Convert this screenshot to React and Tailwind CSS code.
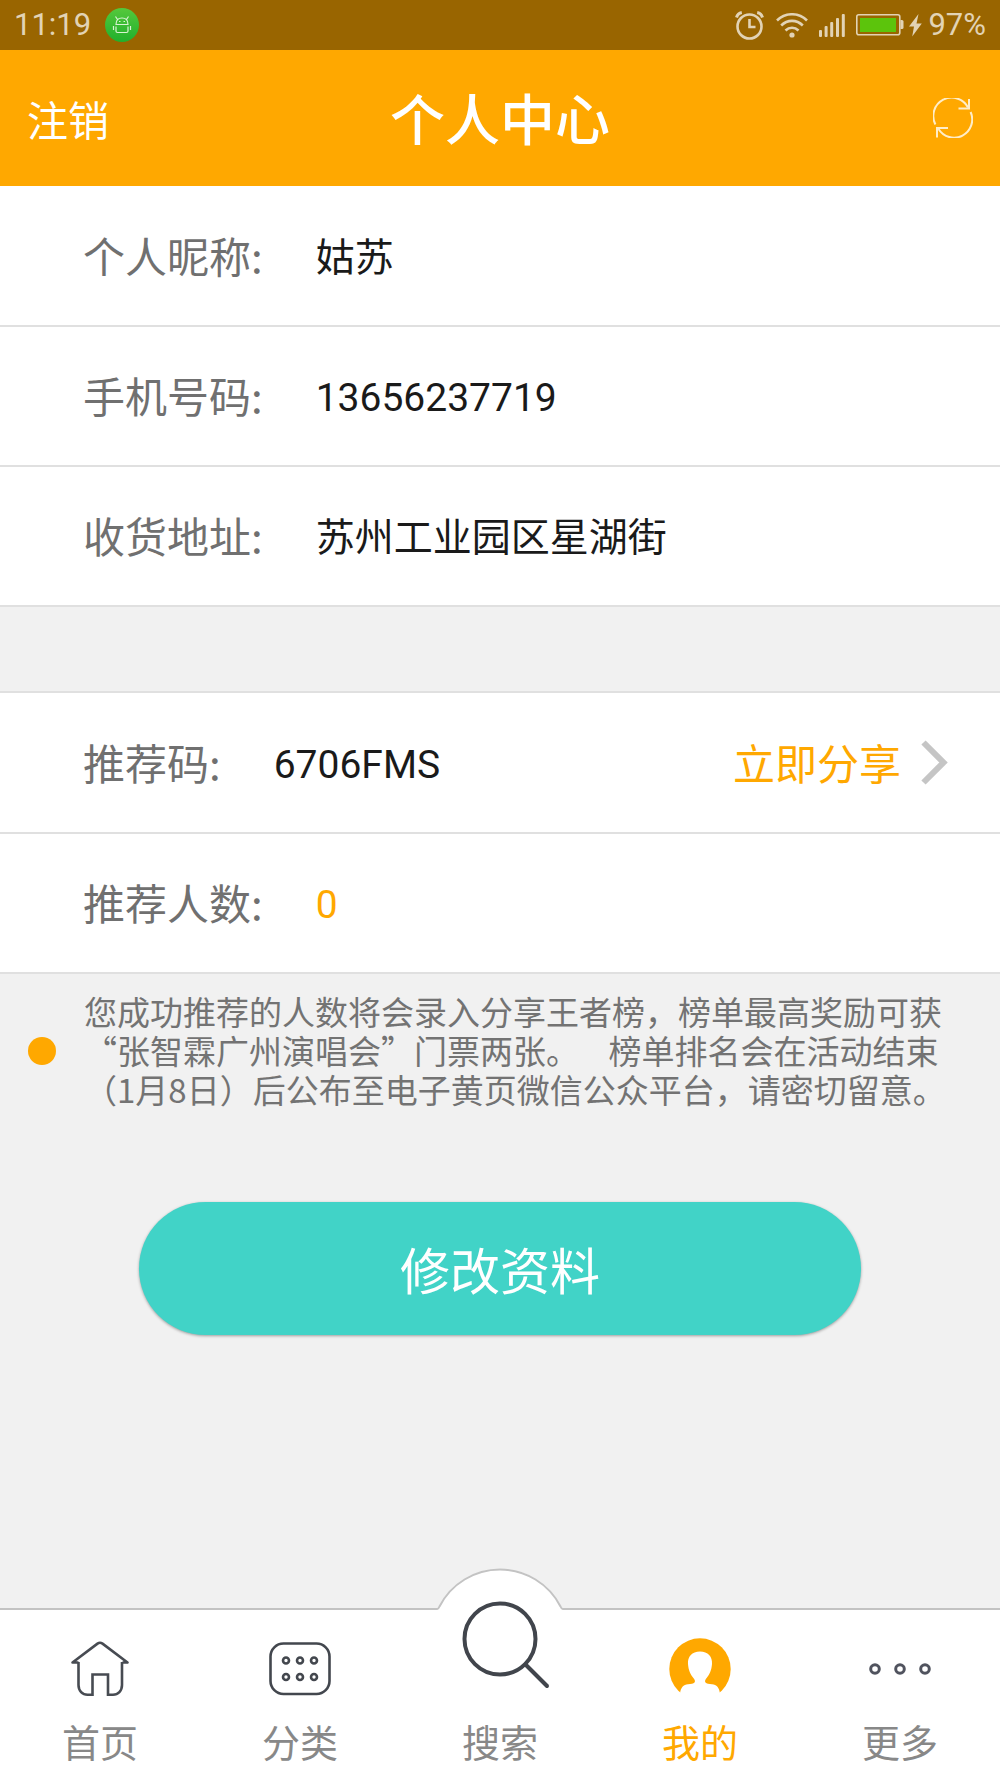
import React, { useState } from "react";

const profile = [
  { label: "个人昵称:", value: "姑苏" },
  { label: "手机号码:", value: "13656237719" },
  { label: "收货地址:", value: "苏州工业园区星湖街" },
];

const note = [
  "您成功推荐的人数将会录入分享王者榜，榜单最高奖励可获",
  "“张智霖广州演唱会”门票两张。    榜单排名会在活动结束",
  "（1月8日）后公布至电子黄页微信公众平台，请密切留意。",
].join("\n");

function StatusBar() {
  return (
    <div className="flex h-[50px] items-center justify-between bg-[#996500] px-[14px] font-['Roboto',sans-serif] text-[31px] leading-[50px] text-[#e2d3b5]">
      <div className="flex items-center gap-[14px]">
        <span>11:19</span>
        <svg width="34" height="34" viewBox="0 0 34 34" fill="none">
          <defs>
            <linearGradient id="badge" x1="0" y1="0" x2="0" y2="1">
              <stop offset="0" stopColor="#55c83c" />
              <stop offset="1" stopColor="#20b02c" />
            </linearGradient>
          </defs>
          <circle cx="17" cy="17" r="17" fill="url(#badge)" />
          <g stroke="#d8f3d2" strokeWidth="1.2">
            <path d="M11 16.500c0-4 2-6.500 6-6.500s6 2.500 6 6.500zM12.500 11.500l-2-3M21.500 11.500l2-3M11 18.500v4.500c0 1 .6 1.500 1.500 1.500h9c.9 0 1.500-.5 1.500-1.500v-4.500M8.500 18v4M25.500 18v4" />
            <path d="M14 13.500h1.500M18.500 13.500H20" />
          </g>
        </svg>
      </div>
      <div className="flex items-center">
        <svg className="mr-3" width="29" height="29" viewBox="0 0 29 29" fill="none" stroke="currentColor">
          <circle cx="14.500" cy="15.500" r="12" strokeWidth="2.600" />
          <path d="M14.500 8v8h6" strokeWidth="2.600" />
          <path d="M1.500 6.500c.8-2.800 2.700-4.500 5.300-5M27.500 6.500c-.8-2.800-2.700-4.500-5.300-5" strokeWidth="3" />
        </svg>
        <svg className="mr-[11px]" width="32" height="25" viewBox="0 0 32 25" fill="none" stroke="currentColor" strokeWidth="2.600">
          <path d="M1 7.500C9.500-.8 22.500-.8 31 7.500M5.200 12.500c6.200-6.200 15.400-6.200 21.600 0M9.500 17.500c3.800-3.700 9.200-3.700 13 0" />
          <circle cx="16" cy="22" r="2.600" fill="currentColor" stroke="none" />
        </svg>
        <svg className="mr-[11px]" width="26" height="23" viewBox="0 0 26 23" fill="currentColor">
          <rect x="0" y="16" width="3" height="7" rx="1" />
          <rect x="5.600" y="12" width="3" height="11" rx="1" />
          <rect x="11.200" y="8" width="3" height="15" rx="1" />
          <rect x="17" y="4" width="3" height="19" rx="1" />
          <rect x="22.800" y="0" width="3" height="23" rx="1" />
        </svg>
        <svg className="mr-[5px]" width="48" height="22" viewBox="0 0 48 22" fill="none">
          <rect x=".8" y=".8" width="43" height="20" rx="2" stroke="currentColor" strokeWidth="1.600" />
          <rect x="4" y="4" width="36" height="14" fill="#5cc40c" />
          <path d="M44.500 6h1.500q1.500 0 1.500 1.500v6q0 1.500-1.500 1.500h-1.500z" fill="currentColor" />
        </svg>
        <svg className="mr-[6px]" width="13" height="23" viewBox="0 0 13 23" fill="currentColor">
          <path d="M9.500 0 0 12.500h5L3.200 22.500 12.800 9.500H7.500z" />
        </svg>
        <span>97%</span>
      </div>
    </div>
  );
}

function Header() {
  return (
    <header className="grid h-[136px] grid-cols-[1fr_auto_1fr] items-center bg-[#ffa800] px-[27px] text-white">
      <button type="button" className="justify-self-start text-[41px] leading-[60px]">
        注销
      </button>
      <h1 className="pb-1 text-[55px] font-medium leading-[80px]">个人中心</h1>
      <button type="button" aria-label="刷新" className="justify-self-end">
        <svg width="40" height="40" viewBox="0 0 40 40" fill="none" stroke="#ffedc8" strokeWidth="2">
          <path d="M2.400 26.500A18.200 18.200 0 0 1 35 9.500M37.600 14A18.200 18.200 0 0 1 5.500 31" />
          <path d="M36 1v9.500H25.500M4 39.500V30h11" />
        </svg>
      </button>
    </header>
  );
}

function Row({ label, value, valueClass = "text-[#1a1a1a]", children }) {
  return (
    <div className="flex h-[140px] items-center border-b-2 border-[#e0e0e0] pb-0.5 pl-[83px] pr-[52px]">
      <dt className="mr-[53px] text-[42px] leading-[60px] text-[#707070]">{label}</dt>
      <dd className={`pt-1.5 font-['Roboto','Noto_Sans_CJK_SC',sans-serif] text-[39px] leading-[60px] ${valueClass}`}>
        {value}
      </dd>
      {children}
    </div>
  );
}

function HomeIcon() {
  return (
    <svg width="62" height="62" viewBox="0 0 62 62" fill="none" stroke="#474b52" strokeWidth="2.600">
      <path d="M9.500 24v23c0 6 4 9.800 9 9.800h5V36.500h15.500v20.300h5c5 0 9-3.800 9-9.800V24" />
      <path d="M9.500 24.500H3.500L28.500 5.600q2.500-1.700 5 0L58.500 24.500h-5" strokeLinejoin="round" />
    </svg>
  );
}

function CategoryIcon() {
  return (
    <svg width="62" height="62" viewBox="0 0 62 62" fill="none" stroke="#43474e" strokeWidth="2.600">
      <rect x="1.500" y="5.500" width="59" height="50.500" rx="13" />
      {[17, 31, 45].map((x) => (
        <g key={x}>
          <circle cx={x} cy="22.500" r="3" />
          <circle cx={x} cy="39" r="3" />
        </g>
      ))}
    </svg>
  );
}

function MeIcon() {
  return (
    <svg width="62" height="62" viewBox="0 0 62 62">
      <circle cx="31" cy="31" r="30.700" fill="#ffa800" />
      <path
        d="M31 13.500c-8 0-12.500 5-12 12.500.5 6.500 2.500 10.500 5 13.500 1.800 2.200 2.500 3.800 1.500 5-1 1.400-3.500 1.500-6.500 1.800-4.500.5-7.500 3.200-8 9.700H4V62h54v-6h-7c-.5-6.500-3.500-9.200-8-9.700-3-.3-5.500-.4-6.500-1.800-1-1.200-.3-2.800 1.500-5 2.500-3 4.500-7 5-13.500.5-7.500-4-12.500-12-12.500z"
        fill="#fff"
      />
    </svg>
  );
}

function MoreIcon() {
  return (
    <svg width="62" height="62" viewBox="0 0 62 62" fill="none" stroke="#50535e" strokeWidth="3">
      <circle cx="6" cy="31" r="4.300" />
      <circle cx="31" cy="31" r="4.300" />
      <circle cx="56" cy="31" r="4.300" />
    </svg>
  );
}

// the search tab pokes out above the bar, so its drawing hangs over the top border
function SearchIcon() {
  return (
    <span className="h-[62px] w-[62px]">
      <svg
        className="absolute -top-[42px] left-1/2 -translate-x-1/2"
        width="126"
        height="126"
        viewBox="0 0 126 126"
        fill="none"
      >
        <path d="M0 41.500Q2 42 2.500 39A67 67 0 0 1 123.500 39Q124 42 126 41.500V46H0z" fill="#fff" />
        <path d="M0 41Q1.500 41 2.500 38.500A68 68 0 0 1 123.500 38.500Q124.500 41 126 41" stroke="#c3c3c3" strokeWidth="2" />
        <circle cx="63" cy="71" r="35.500" stroke="#41454c" strokeWidth="4" />
        <path d="M88.500 96.500 110 118" stroke="#41454c" strokeWidth="4" strokeLinecap="round" />
      </svg>
    </span>
  );
}

const tabs = [
  { id: "home", name: "首页", icon: HomeIcon },
  { id: "category", name: "分类", icon: CategoryIcon },
  { id: "search", name: "搜索", icon: SearchIcon },
  { id: "me", name: "我的", icon: MeIcon },
  { id: "more", name: "更多", icon: MoreIcon },
];

function TabBar() {
  const [active, setActive] = useState("me");

  return (
    <nav className="grid grid-cols-5 border-t-2 border-[#c3c3c3] bg-white">
      {tabs.map(({ id, name, icon: Icon }) => (
        <a
          key={id}
          href={`#${id}`}
          onClick={() => setActive(id)}
          className="relative flex flex-col items-center pb-3 pt-7"
        >
          <Icon />
          <span
            className={`mt-4 text-[38px] leading-[49px] ${
              active === id ? "text-[#ffa800]" : "text-[#888888]"
            }`}
          >
            {name}
          </span>
        </a>
      ))}
    </nav>
  );
}

function App() {
  return (
    <div
      lang="zh-CN"
      className="flex min-h-screen flex-col bg-[#f1f1f1] font-['Noto_Sans_CJK_SC',sans-serif]"
    >
      <StatusBar />
      <Header />
      <main className="flex-1">
        <dl className="bg-white pt-px">
          {profile.map((item) => (
            <Row key={item.label} label={item.label} value={item.value} />
          ))}
        </dl>
        <dl className="mt-[84px] border-t-2 border-[#e0e0e0] bg-white pt-px">
          <Row label="推荐码:" value="6706FMS">
            <dd className="ml-auto">
              <a href="#share" className="flex items-center gap-5 text-[42px] leading-[60px] text-[#ffa800]">
                立即分享
                <svg width="27" height="45" viewBox="0 0 27 45" fill="none" stroke="#c5c5c5" strokeWidth="6">
                  <path d="M2.500 2.500 22.500 22.500 2.500 42.500" />
                </svg>
              </a>
            </dd>
          </Row>
          <Row label="推荐人数:" value="0" valueClass="text-[#ffa800]" />
        </dl>
        <div className="flex items-center pl-7 pt-[18px]">
          <span className="mr-7 h-7 w-7 shrink-0 rounded-full bg-[#ffa800]"></span>
          <p className="whitespace-pre text-[33px] leading-[39px] text-[#737373]">{note}</p>
        </div>
        <div className="px-[139px] pt-[93px]">
          <button
            type="button"
            className="h-[133px] w-full rounded-full bg-[#41d3c7] text-[50px] text-white shadow-[0_1px_3px_rgba(0,0,0,0.35)]"
          >
            修改资料
          </button>
        </div>
      </main>
      <TabBar />
    </div>
  );
}

export default App;
